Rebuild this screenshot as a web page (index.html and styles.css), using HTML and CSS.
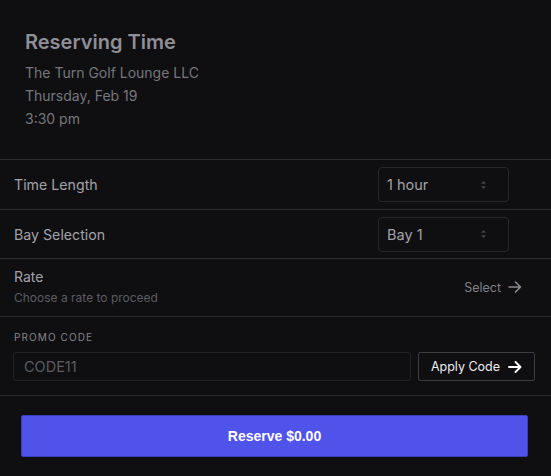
FILE: index.html
```html
<!DOCTYPE html>
<html>
<head>
<meta charset="utf-8">
<link rel="stylesheet" href="styles.css">
</head>
<body>
<div class="page">
  <header class="head">
    <h1 class="title">Reserving Time</h1>
    <div class="meta">The Turn Golf Lounge LLC</div>
    <div class="meta">Thursday, Feb 19</div>
    <div class="meta">3:30 pm</div>
  </header>

  <div class="row">
    <div class="label">Time Length</div>
    <div class="select">
      <span>1 hour</span>
      <svg class="updown" width="7" height="10" viewBox="0 0 7 10"><path d="M3.5 1 L6 3.8 H1 Z M3.5 9 L6 6.2 H1 Z" fill="#434348"/></svg>
    </div>
  </div>

  <div class="row row-tight">
    <div class="label">Bay Selection</div>
    <div class="select">
      <span>Bay 1</span>
      <svg class="updown" width="7" height="10" viewBox="0 0 7 10"><path d="M3.5 1 L6 3.8 H1 Z M3.5 9 L6 6.2 H1 Z" fill="#434348"/></svg>
    </div>
  </div>

  <div class="row rate">
    <div>
      <div class="rate-title">Rate</div>
      <div class="rate-sub">Choose a rate to proceed</div>
    </div>
    <div class="select-link">
      <span>Select</span>
      <svg width="14" height="12" viewBox="0 0 14 12"><path d="M1 6 H12.5 M7.5 1 L12.5 6 L7.5 11" fill="none" stroke="#8a8a90" stroke-width="1.6" stroke-linecap="round" stroke-linejoin="round"/></svg>
    </div>
  </div>

  <div class="promo">
    <div class="promo-label">PROMO CODE</div>
    <div class="promo-row">
      <div class="code-input">CODE11</div>
      <button class="apply">Apply Code
        <svg width="14" height="12" viewBox="0 0 14 12"><path d="M1 6 H12.5 M7.5 1 L12.5 6 L7.5 11" fill="none" stroke="#ffffff" stroke-width="1.9" stroke-linecap="round" stroke-linejoin="round"/></svg>
      </button>
    </div>
  </div>

  <div class="footer">
    <button class="reserve">Reserve $0.00</button>
  </div>
</div>
</body>
</html>
```

FILE: styles.css
```css
html, body {
  margin: 0;
  padding: 0;
  background: #0f0f11;
}
body {
  font-family: Inter, "Noto Sans", sans-serif;
  color: #a0a0a6;
  width: 551px;
  height: 476px;
  overflow: hidden;
}
.page {
  display: flex;
  flex-direction: column;
}
.head {
  padding: 28px 25px 0 25px;
  height: 131px;
  border-bottom: 1px solid #2c2c30;
}
.title {
  margin: 0 0 5px 0;
  font-size: 20px;
  line-height: 28px;
  font-weight: 600;
  color: #8f8f96;
}
.meta {
  font-size: 14px;
  line-height: 23px;
  color: #76767c;
}
.row {
  display: flex;
  align-items: center;
  justify-content: space-between;
  height: 49px;
  padding: 0 42px 0 14px;
  border-bottom: 1px solid #2c2c30;
}
.row-tight {
  height: 48px;
}
.label {
  font-size: 14.2px;
  color: #a2a2a8;
}
.select {
  box-sizing: border-box;
  width: 131px;
  height: 35px;
  border: 1px solid #27272b;
  border-radius: 4px;
  display: flex;
  align-items: center;
  justify-content: space-between;
  padding: 0 21px 0 8px;
  font-size: 14.5px;
  color: #a2a2a8;
}
.updown {
  display: block;
}
.rate {
  height: 57px;
  padding-right: 29px;
}
.rate-title {
  font-size: 14px;
  color: #a2a2a8;
  line-height: 18px;
}
.rate-sub {
  font-size: 12px;
  color: #5c5c62;
  line-height: 20px;
  margin-top: 2px;
}
.select-link {
  display: flex;
  align-items: center;
  gap: 7px;
  font-size: 12.5px;
  color: #808086;
}
.select-link svg {
  margin-top: -2px;
}
.promo {
  padding: 14px 16px 14px 13px;
  border-bottom: 1px solid #2c2c30;
  height: 50px;
}
.promo-label {
  font-size: 10px;
  letter-spacing: 1.1px;
  color: #85858b;
  line-height: 12px;
  margin: 0 0 9px 1px;
}
.promo-row {
  display: flex;
  gap: 7px;
}
.code-input {
  box-sizing: border-box;
  flex: 1;
  height: 29px;
  border: 1px solid #222226;
  border-radius: 3px;
  padding: 0 10px;
  display: flex;
  align-items: center;
  font-size: 14.5px;
  color: #5c5c62;
}
.apply {
  box-sizing: border-box;
  width: 117px;
  height: 29px;
  background: #0f0f11;
  border: 1px solid #3c3c42;
  border-radius: 2px;
  color: #eeeef0;
  font-family: Inter, "Noto Sans", sans-serif;
  font-size: 12.5px;
  display: flex;
  align-items: center;
  justify-content: center;
  gap: 8px;
  padding: 0;
}
.footer {
  padding: 19px 23px 0 21px;
}
.reserve {
  width: 100%;
  height: 42px;
  background: #5053ea;
  border: 1px solid #3d3fb8;
  border-radius: 2px;
  color: #ffffff;
  font-family: "Liberation Sans", Arial, sans-serif;
  font-weight: 700;
  font-size: 14px;
}
```
